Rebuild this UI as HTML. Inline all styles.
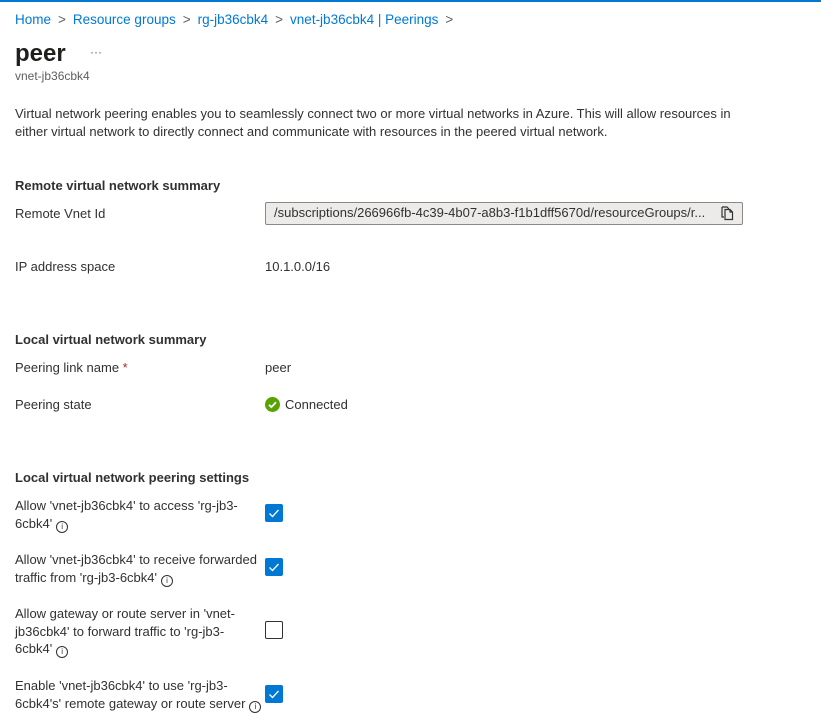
<!DOCTYPE html>
<html><head><meta charset="utf-8"><style>
body{margin:0;width:821px;height:725px;background:#fff;font-family:"Liberation Sans",sans-serif;color:#323130;font-size:13px;position:relative;overflow:hidden}
.a{position:absolute;white-space:nowrap;line-height:17.5px}
.bc{color:#0078d4;font-size:13.5px}
.sep{color:#605e5c;margin:0 7px}
b{font-weight:bold}
.cb{position:absolute;left:265px;width:18px;height:18px;border-radius:2px;background:#0078d4}
.cb.off{background:#fff;border:1px solid #323130;width:16px;height:16px}
.i{display:inline-block;width:10px;height:10px;border:1px solid #323130;border-radius:50%;font-size:8px;line-height:10px;text-align:center;vertical-align:-1px;margin-left:4px}
</style></head><body>
<div style="position:absolute;left:0;top:0;width:821px;height:2px;background:#0078d4"></div>
<div class="a bc" style="left:15px;top:11px">Home<span class="sep">&gt;</span>Resource groups<span class="sep">&gt;</span>rg-jb36cbk4<span class="sep">&gt;</span>vnet-jb36cbk4 | Peerings<span class="sep">&gt;</span></div>
<div class="a" style="left:15px;top:40px;font-size:24px;font-weight:bold;line-height:28px;color:#201f1e">peer</div>
<div class="a" style="left:90px;top:44px;font-size:12px;color:#605e5c">···</div>
<div class="a" style="left:15px;top:68px;font-size:12px;color:#605e5c">vnet-jb36cbk4</div>
<div class="a" style="left:15px;top:105px">Virtual network peering enables you to seamlessly connect two or more virtual networks in Azure. This will allow resources in<br>either virtual network to directly connect and communicate with resources in the peered virtual network.</div>
<div class="a" style="left:15px;top:177px"><b>Remote virtual network summary</b></div>
<div class="a" style="left:15px;top:205px">Remote Vnet Id</div>
<div style="position:absolute;left:265px;top:202px;width:476px;height:21px;border:1px solid #8a8886;background:#edebe9;border-radius:2px"></div>
<div class="a" style="left:274px;top:204px;color:#323130">/subscriptions/266966fb-4c39-4b07-a8b3-f1b1dff5670d/resourceGroups/r...</div>
<svg style="position:absolute;left:719px;top:205px" width="16" height="16" viewBox="0 0 16 16" fill="none" stroke="#323130" stroke-width="1.2"><path d="M3 2h5l2 2v0M3 2v10h2"/><path d="M6 4.5h5l2.5 2.5v7.5H6z"/><path d="M11 4.5V7h2.5"/></svg>
<div class="a" style="left:15px;top:258px">IP address space</div>
<div class="a" style="left:265px;top:258px">10.1.0.0/16</div>
<div class="a" style="left:15px;top:331px"><b>Local virtual network summary</b></div>
<div class="a" style="left:15px;top:359px">Peering link name <span style="color:#a4262c">*</span></div>
<div class="a" style="left:265px;top:359px">peer</div>
<div class="a" style="left:15px;top:396px">Peering state</div>
<svg style="position:absolute;left:265px;top:397px" width="15" height="15" viewBox="0 0 15 15"><circle cx="7.5" cy="7.5" r="7.5" fill="#57a300"/><path d="M4 7.8l2.4 2.3L11 5.2" stroke="#fff" stroke-width="1.8" fill="none"/></svg>
<div class="a" style="left:285px;top:396px">Connected</div>
<div class="a" style="left:15px;top:469px"><b>Local virtual network peering settings</b></div>
<div class="a" style="left:15px;top:497px">Allow 'vnet-jb36cbk4' to access 'rg-jb3-<br>6cbk4'<span class="i">i</span></div>
<div class="a" style="left:15px;top:551px">Allow 'vnet-jb36cbk4' to receive forwarded<br>traffic from 'rg-jb3-6cbk4'<span class="i">i</span></div>
<div class="a" style="left:15px;top:605px">Allow gateway or route server in 'vnet-<br>jb36cbk4' to forward traffic to 'rg-jb3-<br>6cbk4'<span class="i">i</span></div>
<div class="a" style="left:15px;top:677px">Enable 'vnet-jb36cbk4' to use 'rg-jb3-<br>6cbk4's' remote gateway or route server<span class="i">i</span></div>
<div class="cb" style="top:504px"></div>
<div class="cb" style="top:558px"></div>
<div class="cb off" style="top:621px"></div>
<div class="cb" style="top:685px"></div>
<svg style="position:absolute;left:265px;top:504px" width="18" height="200" viewBox="0 0 18 200" fill="none" stroke="#fff" stroke-width="1.3"><path d="M4.5 9.5l3 3 6-6.5"/><path d="M4.5 63.5l3 3 6-6.5"/><path d="M4.5 190.5l3 3 6-6.5"/></svg>
</body></html>
